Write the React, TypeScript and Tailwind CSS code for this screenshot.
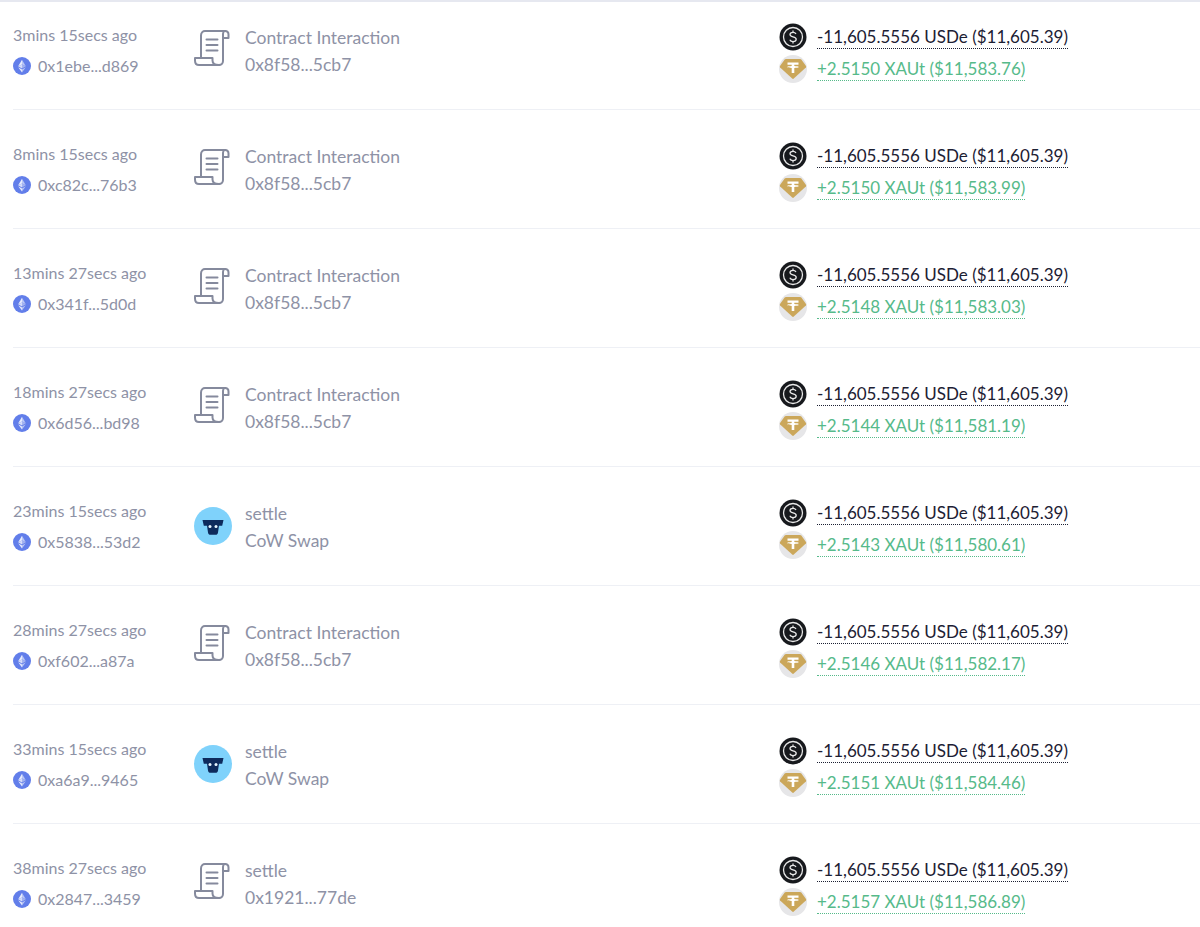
import React from 'react';

type Row = {
  time: string;
  hash: string;
  kind: 'scroll' | 'cow';
  title: string;
  sub: string;
  xaut: string;
};

const rows: Row[] = [
  { time: '3mins 15secs ago', hash: '0x1ebe...d869', kind: 'scroll', title: 'Contract Interaction', sub: '0x8f58...5cb7', xaut: '+2.5150 XAUt ($11,583.76)' },
  { time: '8mins 15secs ago', hash: '0xc82c...76b3', kind: 'scroll', title: 'Contract Interaction', sub: '0x8f58...5cb7', xaut: '+2.5150 XAUt ($11,583.99)' },
  { time: '13mins 27secs ago', hash: '0x341f...5d0d', kind: 'scroll', title: 'Contract Interaction', sub: '0x8f58...5cb7', xaut: '+2.5148 XAUt ($11,583.03)' },
  { time: '18mins 27secs ago', hash: '0x6d56...bd98', kind: 'scroll', title: 'Contract Interaction', sub: '0x8f58...5cb7', xaut: '+2.5144 XAUt ($11,581.19)' },
  { time: '23mins 15secs ago', hash: '0x5838...53d2', kind: 'cow', title: 'settle', sub: 'CoW Swap', xaut: '+2.5143 XAUt ($11,580.61)' },
  { time: '28mins 27secs ago', hash: '0xf602...a87a', kind: 'scroll', title: 'Contract Interaction', sub: '0x8f58...5cb7', xaut: '+2.5146 XAUt ($11,582.17)' },
  { time: '33mins 15secs ago', hash: '0xa6a9...9465', kind: 'cow', title: 'settle', sub: 'CoW Swap', xaut: '+2.5151 XAUt ($11,584.46)' },
  { time: '38mins 27secs ago', hash: '0x2847...3459', kind: 'scroll', title: 'settle', sub: '0x1921...77de', xaut: '+2.5157 XAUt ($11,586.89)' },
];

const EthIcon = () => (
  <svg width="18" height="18" viewBox="0 0 18 18" className="shrink-0">
    <circle cx="9" cy="9" r="9" fill="#627EEA" />
    <path d="M9 2.800v4.700l3.800 1.800z" fill="#b9c6f5" />
    <path d="M9 2.800L5.200 9.300 9 7.500z" fill="#e6ebfc" />
    <path d="M9 7.500L5.200 9.300 9 11.600z" fill="#d5dcf9" />
    <path d="M9 7.500v4.100l3.800-2.300z" fill="#a3b3f0" />
    <path d="M9 12.500v2.900l3.800-5.200z" fill="#b9c6f5" />
    <path d="M9 12.500l-3.800-2.300L9 15.400z" fill="#e6ebfc" />
  </svg>
);

const ScrollIcon = () => (
  <svg width="36" height="38" viewBox="0 0 36 38" fill="none" stroke="#858a9d" strokeWidth="2" strokeLinejoin="round" strokeLinecap="round" className="shrink-0">
    <path d="M7 29V6.500C7 3.500 9 2 11 2h20" />
    <path d="M31 2c2 0 3.500 1.500 3.500 3.500V9H29" />
    <path d="M29 9V5c0-1.500 1-3 2-3" />
    <path d="M29 9v23c0 2.500-2 4-4 4" />
    <path d="M25 36H5c-2.500 0-4-2-4-4.500V29h17.500v2.500c0 2.500 2 4.500 6.500 4.500z" />
    <path d="M12.500 10.500h11M12.500 16h11M12.500 21.500h11" />
  </svg>
);

const CowIcon = () => (
  <svg width="38" height="38" viewBox="0 0 38 38" className="shrink-0">
    <circle cx="19" cy="19" r="19" fill="#7fd2fb" />
    <path d="M8.500 13h21l-1.300 5.800h-3.200l-1 6.700c-.2 1.400-1.100 2.300-2.500 2.300h-5c-1.400 0-2.300-.9-2.500-2.300l-1-6.700h-3.200z" fill="#0d2a5c" />
    <circle cx="16" cy="19.500" r="1.500" fill="#e8f6ff" />
    <circle cx="22" cy="19.500" r="1.500" fill="#e8f6ff" />
  </svg>
);

const UsdeIcon = () => (
  <svg width="28" height="28" viewBox="0 0 28 28" className="shrink-0">
    <circle cx="14" cy="14" r="13.500" fill="#17191d" />
    <circle cx="14" cy="14" r="9.500" fill="none" stroke="#e8e8e8" strokeWidth="1.300" />
    <path d="M17 11c-.5-1-1.600-1.700-3-1.700-1.700 0-3 .9-3 2.300 0 3 6.200 1.600 6.200 4.700 0 1.400-1.400 2.300-3.200 2.300-1.500 0-2.700-.7-3.200-1.800M14 7.500v1.800M14 18.800v1.800" fill="none" stroke="#e8e8e8" strokeWidth="1.300" />
  </svg>
);

const XautIcon = () => (
  <svg width="28" height="28" viewBox="0 0 28 28" className="shrink-0">
    <circle cx="14" cy="14" r="14" fill="#e6e6e8" />
    <path d="M7 4h14c.6 0 1 .2 1.300.6L27 11c.3.500.3 1-.1 1.400L14.800 23.600c-.5.400-1.100.4-1.600 0L1.100 12.400c-.4-.4-.4-.9-.1-1.400L5.700 4.600C6 4.200 6.400 4 7 4z" fill="#cba75a" />
    <path d="M8.500 7.500h11v2.200h-4.200v1.300c2.100.1 4.700.5 4.700 1s-2.600.9-4.700 1v5h-2.600v-5c-2.100-.1-4.700-.5-4.700-1s2.600-.9 4.700-1V9.700H8.500z" fill="#fff" />
  </svg>
);

export default function App() {
  return (
    <div className="h-[927px] w-[1200px] overflow-hidden border-t-2 border-[#e6e8f0] bg-white font-['Lato',sans-serif]">
      <div className="pl-[13px]">
        {rows.map((row, i) => (
          <div
            key={row.hash}
            className={`flex border-b border-[#eef0f5] ${i === 0 ? 'h-[108px] pt-[23px]' : 'h-[119px] pt-[34px]'}`}
          >
            <div className="w-[181px] shrink-0 text-[16px] text-[#8e92a6]">
              <div className="-mt-px h-[22px] leading-[22px]">{row.time}</div>
              <div className="mt-[9px] flex h-[22px] items-center gap-[7px] leading-[22px]">
                <EthIcon />
                <span>{row.hash}</span>
              </div>
            </div>

            <div className="flex w-[585px] shrink-0">
              <div className={`flex w-[51px] shrink-0 ${row.kind === 'cow' ? 'pt-[6px]' : 'pt-[4px]'}`}>
                {row.kind === 'cow' ? <CowIcon /> : <ScrollIcon />}
              </div>
              <div className="pt-[2px] text-[17.5px] text-[#8e92a6]">
                <div className="h-[22px] leading-[22px]">{row.title}</div>
                <div className="mt-[5px] h-[22px] leading-[22px]">{row.sub}</div>
              </div>
            </div>

            <div className="-mt-[2px] text-[17px]">
              <div className="flex h-[28px] items-center gap-[10px]">
                <UsdeIcon />
                <span className="border-b border-dotted border-[#1c2033] pt-px leading-[22px] text-[#1c2033]">-11,605.5556 USDe ($11,605.39)</span>
              </div>
              <div className="mt-[4px] flex h-[28px] items-center gap-[10px]">
                <XautIcon />
                <span className="border-b border-dotted border-[#56ba8a] pt-px leading-[22px] text-[#56ba8a]">{row.xaut}</span>
              </div>
            </div>
          </div>
        ))}
      </div>
    </div>
  );
}
